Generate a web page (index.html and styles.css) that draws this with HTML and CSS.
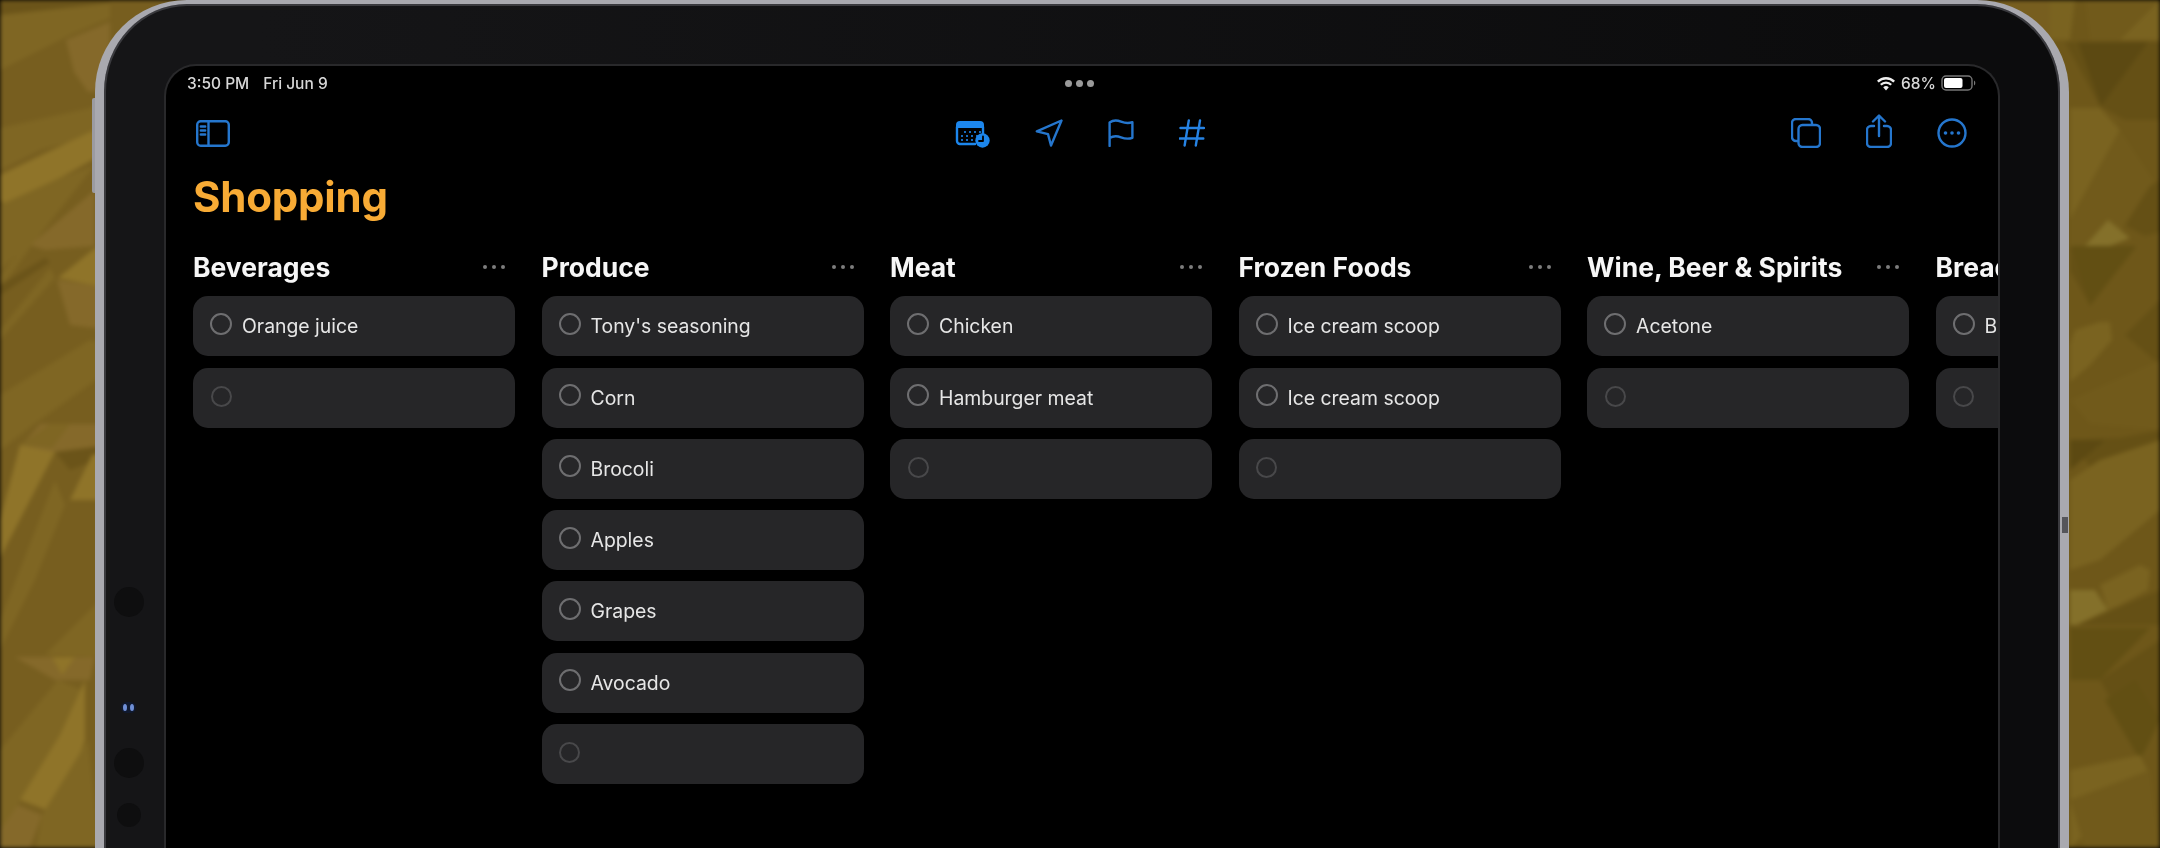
FILE: index.html
```html
<!DOCTYPE html>
<html lang="en">
<head>
<meta charset="utf-8">
<title>Shopping</title>
<link rel="stylesheet" href="styles.css">
</head>
<body>
<div class="stage">
  <svg class="backdrop" viewBox="0 0 2160 848" preserveAspectRatio="none" aria-hidden="true">
    <rect class="b0" width="2160" height="848"/>
    <polygon class="b2" points="0,70 70,35 110,18 110,0 0,0"/>
    <polygon class="b4" points="0,0 110,0 110,3 0,15"/>
    <polygon class="b1" points="66,40 110,22 110,90 88,92 74,72"/>
    <polygon class="b2" points="0,170 0,128 90,108 110,100 110,132 40,150"/>
    <polygon class="b3" points="0,175 90,132 110,124 110,150 60,178 5,205 0,200"/>
    <polygon class="b2" points="0,205 60,178 28,245 0,270"/>
    <polygon class="b2" points="25,245 60,178 95,165 32,245 0,290 0,275"/>
    <polygon class="b1" points="30,245 95,190 95,246 45,250"/>
    <polygon class="b3" points="58,278 95,248 110,246 110,290 92,285"/>
    <polygon class="b4" points="0,285 45,258 50,262 0,295"/>
    <polygon class="b2" points="0,330 50,268 55,278 0,340"/>
    <polygon class="b1" points="57,280 92,285 110,290 110,330 70,325"/>
    <polygon class="b2" points="0,395 90,340 110,345 110,370 40,420 0,450"/>
    <polygon class="b1" points="40,424 110,424 110,452 35,452 22,445"/>
    <polygon class="b4" points="55,452 110,445 110,455 70,470"/>
    <polygon class="b3" points="70,500 92,455 110,450 110,500"/>
    <polygon class="b2" points="52,448 70,424 50,424 20,445"/>
    <polygon class="b3" points="20,445 55,452 0,558 0,520"/>
    <polygon class="b2" points="55,480 65,505 35,580 0,650 0,620"/>
    <polygon class="b2" points="45,655 110,590 110,657"/>
    <polygon class="b1" points="15,657 95,657 90,680 55,680"/>
    <polygon class="b3" points="52,657 75,657 62,675"/>
    <polygon class="b2" points="0,750 58,680 82,690 70,735 20,800 0,848"/>
    <polygon class="b3" points="85,680 60,735 20,800 60,815 85,740"/>
    <polygon class="b1" points="0,830 18,805 42,815 30,848 0,848"/>
    <polygon class="b2" points="42,815 88,740 100,848 36,848"/>

    <rect class="r0" x="2050" width="110" height="848"/>
    <polygon class="r1" points="2050,0 2075,0 2070,40 2050,40"/>
    <polygon class="r2" points="2090,40 2085,0 2160,0 2160,5 2120,40"/>
    <polygon class="r1" points="2120,40 2160,0 2160,40"/>
    <polygon class="r3" points="2065,42 2160,42 2160,120 2125,120 2100,106"/>
    <polygon class="r4" points="2078,42 2148,42 2101,106"/>
    <polygon class="r1" points="2070,108 2100,108 2120,130 2070,220"/>
    <polygon class="r2" points="2120,130 2160,190 2125,225 2110,246 2070,246 2070,220"/>
    <polygon class="r3" points="2125,225 2150,186 2160,180 2160,232 2145,236"/>
    <polygon class="r5" points="2108,220 2130,238 2110,246 2107,246 2107,246 2085,246"/>
    <polygon class="r3" points="2070,247 2136,247 2090,305 2070,270"/>
    <polygon class="r6" points="2072,246 2136,246 2090,306"/>
    <polygon class="r1" points="2075,330 2100,322 2110,322 2112,340 2090,365 2070,382 2070,345"/>
    <polygon class="r3" points="2125,335 2160,300 2160,365"/>
    <polygon class="r2" points="2070,400 2160,360 2160,430 2090,424"/>
    <polygon class="r3" points="2070,440 2120,438 2160,430 2160,450 2100,480"/>
    <polygon class="r4" points="2070,440 2105,440 2070,470"/>
    <polygon class="r1" points="2070,480 2100,460 2160,440 2160,510 2100,560 2070,570"/>
    <polygon class="r5" points="2070,590 2095,590 2108,610 2070,628"/>
    <polygon class="r1" points="2100,585 2140,565 2150,570 2148,590 2120,605 2108,610"/>
    <polygon class="r3" points="2070,628 2160,590 2160,625 2070,625"/>
    <polygon class="r6" points="2070,628 2150,628 2100,680 2070,680"/>
    <polygon class="r3" points="2100,680 2160,640 2160,720 2140,750"/>
    <polygon class="r6" points="2105,700 2135,680 2160,720 2140,760"/>
    <polygon class="r1" points="2070,770 2140,755 2150,775 2070,848"/>
    <polygon class="r2" points="2070,800 2150,770 2160,848 2085,848"/>
  </svg>

  <div class="device">
    <span class="side-key side-key-top"></span>
    <span class="side-key side-key-right"></span>
    <span class="sensor sensor-a"></span>
    <span class="sensor-led"><i></i><i></i></span>
    <span class="sensor sensor-b"></span>
    <span class="sensor sensor-c"></span>

    <main class="screen">
      <header class="status">
        <div class="status-time"><span>3:50 PM</span><span>Fri Jun 9</span></div>
        <div class="status-dots"><i></i><i></i><i></i></div>
        <div class="status-right">
          <svg class="wifi" viewBox="0 0 20 15" aria-hidden="true"><path d="M10 14.4 7.2 11.3a4 4 0 0 1 5.6 0Z" /><path d="M5.6 9.6 4 7.9a8.4 8.4 0 0 1 12 0l-1.6 1.7a6.2 6.2 0 0 0-8.8 0Z"/><path d="M2.7 6.5 1 4.8a12.6 12.6 0 0 1 18 0l-1.7 1.7a10.2 10.2 0 0 0-14.6 0Z"/></svg>
          <span>68%</span>
          <svg class="battery" viewBox="0 0 36 16" aria-hidden="true"><rect class="bat-shell" x="1" y="1" width="30" height="14" rx="4"/><rect class="bat-fill" x="3" y="3" width="18.5" height="10" rx="2"/><path class="bat-tip" d="M33 5.5a3 3 0 0 1 0 5Z"/></svg>
        </div>
      </header>

      <nav class="toolbar">
        <div class="tool-left">
          <svg class="icon i-sidebar" viewBox="0 0 34 27" aria-hidden="true"><rect x="1.2" y="1.2" width="31.6" height="24.6" rx="3.5"/><path d="M12.5 1.5v24M4.8 6.5h4.4M4.8 10.5h4.4M4.8 14.5h4.4"/></svg>
        </div>
        <div class="tool-center">
          <svg class="icon i-cal" viewBox="0 0 35 29" aria-hidden="true">
            <path class="solid" d="M1 6a4 4 0 0 1 4-4h20a4 4 0 0 1 4 4v3H1Z"/>
            <path d="M2 8v14a3 3 0 0 0 3 3h15M28 8v7"/>
            <g class="dots"><circle cx="10" cy="13" r="1.1"/><circle cx="15" cy="13" r="1.1"/><circle cx="20" cy="13" r="1.1"/><circle cx="25" cy="13" r="1.1"/><circle cx="7" cy="17" r="1.1"/><circle cx="12" cy="17" r="1.1"/><circle cx="17" cy="17" r="1.1"/><circle cx="22" cy="17" r="1.1"/><circle cx="7" cy="21" r="1.1"/><circle cx="12" cy="21" r="1.1"/><circle cx="17" cy="21" r="1.1"/></g>
            <circle class="solid" cx="27.5" cy="21.5" r="7.2"/>
            <path class="hand" d="M28 17.5v4.5h-4"/>
          </svg>
          <svg class="icon i-nav" viewBox="0 0 28 28" aria-hidden="true"><path d="M26.5 1.5 1.8 12.3l11.2 2.8 3 11.4Z"/></svg>
          <svg class="icon i-flag" viewBox="0 0 26 28" aria-hidden="true"><path d="M1.6 27V3.4C5 1 9 1 13 2.6s8 1.8 11.4.6v15.6c-3.4 1.2-7.4 1-11.4-.5s-8-1.4-11.4.7"/></svg>
          <svg class="icon i-hash" viewBox="0 0 26 28" aria-hidden="true"><path d="M9.8 1.5 5.6 26.5M21 1.5l-4.2 25M1.5 9h23.5M.8 19.5h23.5"/></svg>
        </div>
        <div class="tool-right">
          <svg class="icon i-copy" viewBox="0 0 30 30" aria-hidden="true"><path d="M6.5 23H5a4 4 0 0 1-4-4V5a4 4 0 0 1 4-4h12a4 4 0 0 1 4 4v1.5"/><rect x="7.5" y="7" width="21.5" height="22" rx="4"/></svg>
          <svg class="icon i-share" viewBox="0 0 26 34" aria-hidden="true"><path d="M8 12H5a4 4 0 0 0-4 4v13a4 4 0 0 0 4 4h16a4 4 0 0 0 4-4V16a4 4 0 0 0-4-4h-3"/><path d="M13 22V2M7 7.5 13 1.5l6 6"/></svg>
          <svg class="icon i-more" viewBox="0 0 30 30" aria-hidden="true"><circle cx="15" cy="15" r="13.5"/><g class="more-dots"><circle cx="8.5" cy="15" r="1.8"/><circle cx="15" cy="15" r="1.8"/><circle cx="21.5" cy="15" r="1.8"/></g></svg>
        </div>
      </nav>

      <h1 class="title">Shopping</h1>

      <section class="board">
        <div class="col">
          <div class="col-head"><h2>Beverages</h2><div class="col-more"><i></i><i></i><i></i></div></div>
          <div class="card"><span class="ring"></span><span>Orange juice</span></div>
          <div class="card card-empty"><span class="ring"></span></div>
        </div>
        <div class="col">
          <div class="col-head"><h2>Produce</h2><div class="col-more"><i></i><i></i><i></i></div></div>
          <div class="card"><span class="ring"></span><span>Tony's seasoning</span></div>
          <div class="card"><span class="ring"></span><span>Corn</span></div>
          <div class="card"><span class="ring"></span><span>Brocoli</span></div>
          <div class="card"><span class="ring"></span><span>Apples</span></div>
          <div class="card"><span class="ring"></span><span>Grapes</span></div>
          <div class="card"><span class="ring"></span><span>Avocado</span></div>
          <div class="card card-empty"><span class="ring"></span></div>
        </div>
        <div class="col">
          <div class="col-head"><h2>Meat</h2><div class="col-more"><i></i><i></i><i></i></div></div>
          <div class="card"><span class="ring"></span><span>Chicken</span></div>
          <div class="card"><span class="ring"></span><span>Hamburger meat</span></div>
          <div class="card card-empty"><span class="ring"></span></div>
        </div>
        <div class="col">
          <div class="col-head"><h2>Frozen Foods</h2><div class="col-more"><i></i><i></i><i></i></div></div>
          <div class="card"><span class="ring"></span><span>Ice cream scoop</span></div>
          <div class="card"><span class="ring"></span><span>Ice cream scoop</span></div>
          <div class="card card-empty"><span class="ring"></span></div>
        </div>
        <div class="col">
          <div class="col-head"><h2>Wine, Beer &amp; Spirits</h2><div class="col-more"><i></i><i></i><i></i></div></div>
          <div class="card"><span class="ring"></span><span>Acetone</span></div>
          <div class="card card-empty"><span class="ring"></span></div>
        </div>
        <div class="col">
          <div class="col-head"><h2>Bread</h2><div class="col-more"><i></i><i></i><i></i></div></div>
          <div class="card"><span class="ring"></span><span>Bread</span></div>
          <div class="card card-empty"><span class="ring"></span></div>
        </div>
      </section>
    </main>
  </div>
</div>
</body>
</html>
```
FILE: styles.css
```css
* { box-sizing: border-box; }
html, body { margin: 0; padding: 0; background: #000; }
body { font-family: Inter, "Noto Sans", sans-serif; color: #f0f0f0; }

.stage { position: relative; width: 2160px; height: 848px; overflow: hidden; padding-left: 95px; }
.backdrop { position: absolute; inset: 0; width: 2160px; height: 848px; filter: blur(2px); }
.b0 { fill: #775e1f; }
.b1 { fill: #85692a; }
.b2 { fill: #7f6623; }
.b3 { fill: #8f7429; }
.b4 { fill: #6b5419; }
.r0 { fill: #6e5719; }
.r1 { fill: #7a6320; }
.r2 { fill: #715a1b; }
.r3 { fill: #655015; }
.r4 { fill: #5c4912; }
.r5 { fill: #84702a; }
.r6 { fill: #624f13; }

.device {
  position: relative;
  width: 1974px;
  height: 960px;
  padding: 62px 61px 0 62px;
  border: 9px solid #a9a9af;
  border-top-width: 4px;
  border-bottom-width: 0;
  border-radius: 92px;
  background: linear-gradient(90deg, #151517 0 8%, #0c0c0d 92%);
  box-shadow: inset 0 0 0 2px #3a3a3e;
}
.side-key { position: absolute; background: #9b9ba1; }
.side-key-top { left: -12px; top: 94px; width: 3px; height: 95px; border-radius: 2px 0 0 2px; }
.side-key-right { right: -8px; top: 513px; width: 6px; height: 16px; background: #55555a; }
.sensor { position: absolute; border-radius: 50%; background: #0e0e0f; }
.sensor-a { left: 10px; top: 583px; width: 30px; height: 30px; }
.sensor-b { left: 10px; top: 744px; width: 30px; height: 30px; }
.sensor-c { left: 13px; top: 799px; width: 24px; height: 24px; }
.sensor-led { position: absolute; left: 17px; top: 698px; display: flex; gap: 3px; padding: 2px; border-radius: 6px; background: #10192e; }
.sensor-led i { width: 4px; height: 7px; border-radius: 50%; background: #6f8fd6; }

.screen {
  width: 1832px;
  height: 900px;
  background: #000;
  border-radius: 30px 30px 0 0;
  box-shadow: 0 0 0 2px #29292b;
  overflow: hidden;
  filter: blur(.45px);
}

.status { display: grid; grid-template-columns: 1fr auto 1fr; align-items: center; height: 34px; padding: 0 21px 0 21px; font-size: 15.5px; color: #d8d8d8; font-weight: 500; }
.status-time { display: flex; gap: 14px; }
.status-dots { display: flex; gap: 4px; margin-right: 5px; }
.status-dots i { width: 7px; height: 7px; border-radius: 50%; background: #9a9a9a; }
.status-right { display: flex; justify-content: flex-end; align-items: center; gap: 5px; }
.wifi { width: 20px; height: 15px; fill: #eee; }
.battery { width: 36px; height: 16px; }
.bat-shell { fill: none; stroke: #777; stroke-width: 1.4; }
.bat-fill { fill: #fff; }
.bat-tip { fill: #777; }

.toolbar { display: grid; grid-template-columns: 1fr auto 1fr; align-items: center; height: 50px; margin-top: 8px; padding: 0 31px 0 30px; }
.tool-left { display: flex; }
.tool-center { display: flex; align-items: center; gap: 45px; margin-right: 3px; }
.tool-right { display: flex; justify-content: flex-end; align-items: center; gap: 45px; }
.icon { display: block; fill: none; stroke: #2576cd; stroke-width: 2.4; stroke-linecap: round; stroke-linejoin: round; }
.i-sidebar { width: 34px; height: 27px; }
.i-cal { width: 35px; height: 29px; stroke: #1c86ec; }
.i-cal .solid { fill: #1c86ec; stroke: none; }
.i-cal .dots { fill: #1c86ec; stroke: none; }
.i-cal .hand { stroke: #000; stroke-width: 1.8; }
.i-nav { width: 28px; height: 28px; }
.i-flag { width: 26px; height: 28px; }
.i-hash { width: 26px; height: 28px; stroke: #2683e4; }
.i-copy { width: 30px; height: 30px; }
.i-share { width: 26px; height: 34px; margin-top: -4px; }
.i-more { width: 30px; height: 30px; }
.more-dots { fill: #2576cd; stroke: none; }

.title { margin: 14px 0 0; padding-left: 27px; font-size: 42px; line-height: 50px; font-weight: 700; color: #f8ab35; letter-spacing: -.2px; }

.board { display: flex; gap: 26.5px; margin-top: 27px; padding-left: 27px; }
.col { flex: 0 0 322px; display: flex; flex-direction: column; gap: 11.3px; }
.col-head { display: flex; justify-content: space-between; align-items: center; height: 36px; padding-right: 10px; }
.col-head h2 { margin: 0; font-size: 26.5px; line-height: 30px; font-weight: 700; color: #f6f6f6; white-space: nowrap; }
.col-more { display: flex; gap: 5px; }
.col-more i { width: 4px; height: 4px; border-radius: 50%; background: #7d7d7d; }

.card { display: flex; align-items: center; gap: 10px; height: 60px; padding: 0 17px; border-radius: 15px; background: #262628; font-size: 19.4px; color: #e6e6e6; white-space: nowrap; }
.ring { flex: none; width: 22px; height: 22px; margin-top: -5px; border: 2px solid #6e6e70; border-radius: 50%; }
.card-empty .ring { width: 21px; height: 21px; margin-left: .5px; margin-top: -3px; border-color: #48484a; }
```
